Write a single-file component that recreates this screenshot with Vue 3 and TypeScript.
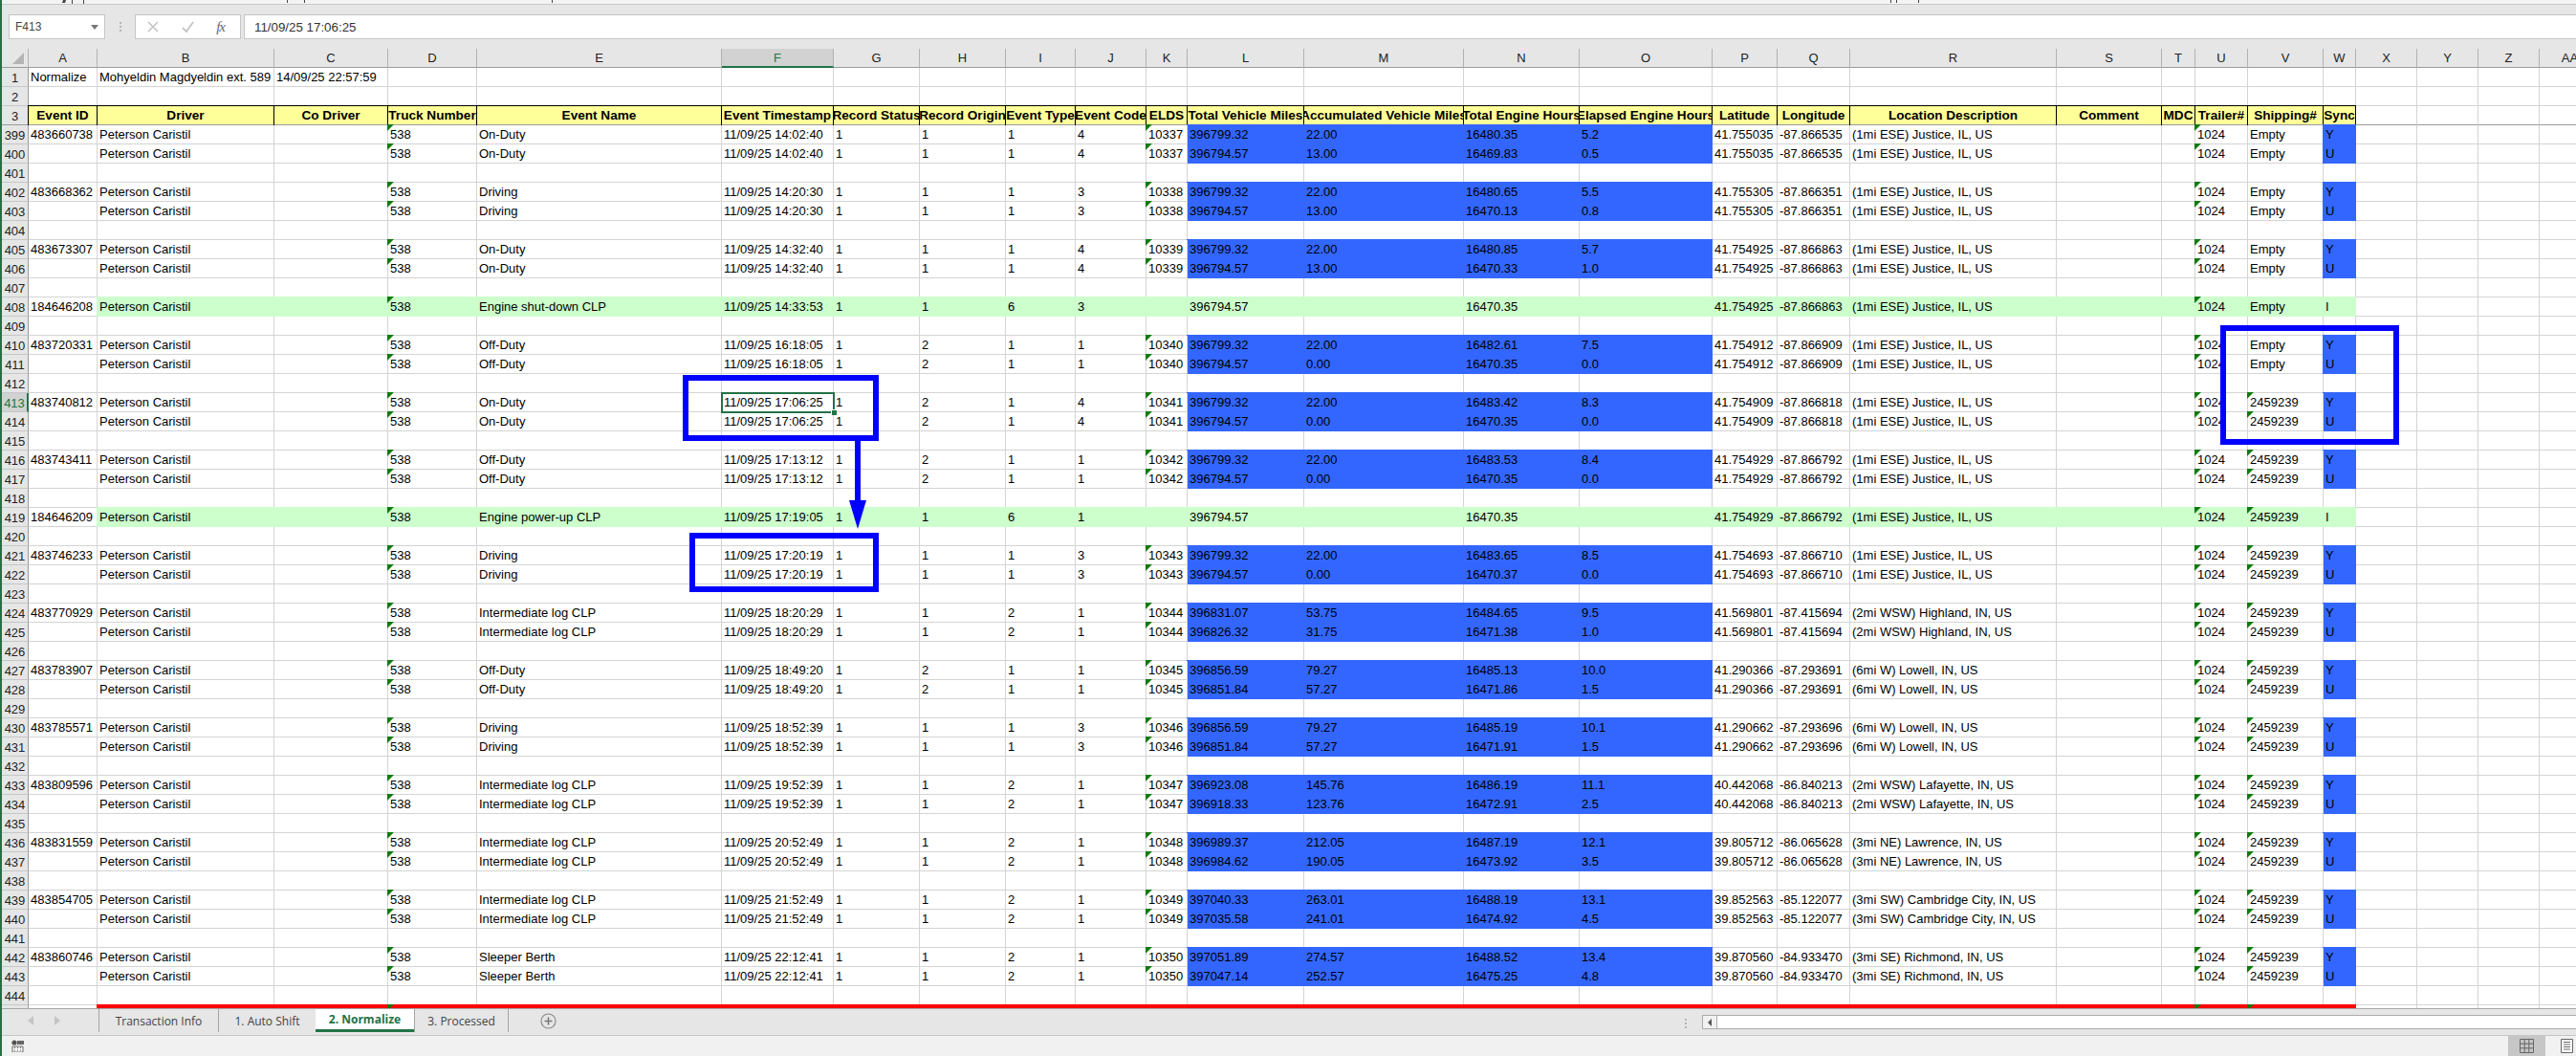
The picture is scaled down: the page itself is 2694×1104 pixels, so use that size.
<script setup lang="ts">
interface Cell { key: string; text: string; cls: string }
interface Event2 {
  id: string; ev: string; time: string; h: string; i: string; j: string; k: string
  l: string[]; m: string[]; n: string[]; o: string[]
  lat: string; lon: string; loc: string; ship: string
}
interface Green {
  id: string; ev: string; time: string; i: string; j: string
  l: string; n: string; lat: string; lon: string; loc: string; ship: string; green: true
}

const letters = ['A','B','C','D','E','F','G','H','I','J','K','L','M','N','O','P','Q','R','S','T','U','V','W','X','Y','Z','AA']
const headers = ['Event ID','Driver','Co Driver','Truck Number','Event Name','Event Timestamp','Record Status','Record Origin','Event Type','Event Code','ELDS','Total Vehicle Miles','Accumulated Vehicle Miles','Total Engine Hours','Elapsed Engine Hours','Latitude','Longitude','Location Description','Comment','MDC','Trailer#','Shipping#','Sync']

const base = ['396799.32', '396794.57']
const justice = '(1mi ESE) Justice, IL, US'
const il = 'Intermediate log CLP'
const items: (Event2 | Green)[] = [
  { id:'483660738', ev:'On-Duty', time:'14:02:40', h:'1', i:'1', j:'4', k:'10337', l:base, m:['22.00','13.00'], n:['16480.35','16469.83'], o:['5.2','0.5'], lat:'41.755035', lon:'-87.866535', loc:justice, ship:'Empty' },
  { id:'483668362', ev:'Driving', time:'14:20:30', h:'1', i:'1', j:'3', k:'10338', l:base, m:['22.00','13.00'], n:['16480.65','16470.13'], o:['5.5','0.8'], lat:'41.755305', lon:'-87.866351', loc:justice, ship:'Empty' },
  { id:'483673307', ev:'On-Duty', time:'14:32:40', h:'1', i:'1', j:'4', k:'10339', l:base, m:['22.00','13.00'], n:['16480.85','16470.33'], o:['5.7','1.0'], lat:'41.754925', lon:'-87.866863', loc:justice, ship:'Empty' },
  { green:true, id:'184646208', ev:'Engine shut-down CLP', time:'14:33:53', i:'6', j:'3', l:'396794.57', n:'16470.35', lat:'41.754925', lon:'-87.866863', loc:justice, ship:'Empty' },
  { id:'483720331', ev:'Off-Duty', time:'16:18:05', h:'2', i:'1', j:'1', k:'10340', l:base, m:['22.00','0.00'], n:['16482.61','16470.35'], o:['7.5','0.0'], lat:'41.754912', lon:'-87.866909', loc:justice, ship:'Empty' },
  { id:'483740812', ev:'On-Duty', time:'17:06:25', h:'2', i:'1', j:'4', k:'10341', l:base, m:['22.00','0.00'], n:['16483.42','16470.35'], o:['8.3','0.0'], lat:'41.754909', lon:'-87.866818', loc:justice, ship:'2459239' },
  { id:'483743411', ev:'Off-Duty', time:'17:13:12', h:'2', i:'1', j:'1', k:'10342', l:base, m:['22.00','0.00'], n:['16483.53','16470.35'], o:['8.4','0.0'], lat:'41.754929', lon:'-87.866792', loc:justice, ship:'2459239' },
  { green:true, id:'184646209', ev:'Engine power-up CLP', time:'17:19:05', i:'6', j:'1', l:'396794.57', n:'16470.35', lat:'41.754929', lon:'-87.866792', loc:justice, ship:'2459239' },
  { id:'483746233', ev:'Driving', time:'17:20:19', h:'1', i:'1', j:'3', k:'10343', l:base, m:['22.00','0.00'], n:['16483.65','16470.37'], o:['8.5','0.0'], lat:'41.754693', lon:'-87.866710', loc:justice, ship:'2459239' },
  { id:'483770929', ev:il, time:'18:20:29', h:'1', i:'2', j:'1', k:'10344', l:['396831.07','396826.32'], m:['53.75','31.75'], n:['16484.65','16471.38'], o:['9.5','1.0'], lat:'41.569801', lon:'-87.415694', loc:'(2mi WSW) Highland, IN, US', ship:'2459239' },
  { id:'483783907', ev:'Off-Duty', time:'18:49:20', h:'2', i:'1', j:'1', k:'10345', l:['396856.59','396851.84'], m:['79.27','57.27'], n:['16485.13','16471.86'], o:['10.0','1.5'], lat:'41.290366', lon:'-87.293691', loc:'(6mi W) Lowell, IN, US', ship:'2459239' },
  { id:'483785571', ev:'Driving', time:'18:52:39', h:'1', i:'1', j:'3', k:'10346', l:['396856.59','396851.84'], m:['79.27','57.27'], n:['16485.19','16471.91'], o:['10.1','1.5'], lat:'41.290662', lon:'-87.293696', loc:'(6mi W) Lowell, IN, US', ship:'2459239' },
  { id:'483809596', ev:il, time:'19:52:39', h:'1', i:'2', j:'1', k:'10347', l:['396923.08','396918.33'], m:['145.76','123.76'], n:['16486.19','16472.91'], o:['11.1','2.5'], lat:'40.442068', lon:'-86.840213', loc:'(2mi WSW) Lafayette, IN, US', ship:'2459239' },
  { id:'483831559', ev:il, time:'20:52:49', h:'1', i:'2', j:'1', k:'10348', l:['396989.37','396984.62'], m:['212.05','190.05'], n:['16487.19','16473.92'], o:['12.1','3.5'], lat:'39.805712', lon:'-86.065628', loc:'(3mi NE) Lawrence, IN, US', ship:'2459239' },
  { id:'483854705', ev:il, time:'21:52:49', h:'1', i:'2', j:'1', k:'10349', l:['397040.33','397035.58'], m:['263.01','241.01'], n:['16488.19','16474.92'], o:['13.1','4.5'], lat:'39.852563', lon:'-85.122077', loc:'(3mi SW) Cambridge City, IN, US', ship:'2459239' },
  { id:'483860746', ev:'Sleeper Berth', time:'22:12:41', h:'1', i:'2', j:'1', k:'10350', l:['397051.89','397047.14'], m:['274.57','252.57'], n:['16488.52','16475.25'], o:['13.4','4.8'], lat:'39.870560', lon:'-84.933470', loc:'(3mi SE) Richmond, IN, US', ship:'2459239' },
]

const cells: Cell[] = []

function push(num: string, vals: Record<string, string>, extra: (c: string) => string, headCls = ''): void {
  cells.push({ key: `h${num}`, text: num, cls: `rowhead ${headCls}` })
  letters.forEach((c) => {
    cells.push({ key: `${c}${num}`, text: vals[c] ?? '', cls: `cell ${extra(c)}` })
  })
}

cells.push({ key: 'corner', text: '', cls: 'corner' })
letters.forEach((c) => {
  cells.push({ key: `col${c}`, text: c, cls: c === 'F' ? 'colhead colsel' : 'colhead' })
})

push('1', { A:'Normalize', B:'Mohyeldin Magdyeldin ext. 589', C:'14/09/25 22:57:59' }, () => '')
push('2', {}, () => '')
const headVals: Record<string, string> = {}
headers.forEach((h, i) => { headVals[letters[i]] = h })
push('3', headVals, (c) => (letters.indexOf(c) < 23 ? 'yellow' : 'frozen'), 'frozenhead')

let row = 399
const driver = 'Peterson Caristil'
items.forEach((it) => {
  if ('green' in it) {
    const v: Record<string, string> = {
      A: it.id, B: driver, D: '538', E: it.ev, F: `11/09/25 ${it.time}`, G: '1', H: '1', I: it.i, J: it.j,
      L: it.l, N: it.n, P: it.lat, Q: it.lon, R: it.loc, U: '1024', V: it.ship, W: 'I',
    }
    push(String(row++), v, (c) => {
      const idx = letters.indexOf(c)
      const fill = idx >= 1 && idx <= 22 ? 'green' : ''
      const tri = c === 'D' || c === 'U' || (c === 'V' && it.ship !== 'Empty') ? 'tri' : ''
      return `${fill} ${tri}`
    })
  } else {
    ;[0, 1].forEach((n) => {
      const num = row++
      const v: Record<string, string> = {
        B: driver, D: '538', E: it.ev, F: `11/09/25 ${it.time}`, G: '1', H: it.h, I: it.i, J: it.j, K: it.k,
        L: it.l[n], M: it.m[n], N: it.n[n], O: it.o[n], P: it.lat, Q: it.lon, R: it.loc, U: '1024', V: it.ship, W: n === 0 ? 'Y' : 'U',
      }
      if (n === 0) v.A = it.id
      push(String(num), v, (c) => {
        const parts: string[] = []
        if (['L', 'M', 'N', 'O', 'W'].includes(c)) parts.push('blue')
        if (c === 'D' || c === 'K' || c === 'U' || (c === 'V' && it.ship !== 'Empty')) parts.push('tri')
        if (num === 413 && c === 'F') parts.push('active')
        return parts.join(' ')
      }, num === 413 ? 'rowsel' : '')
    })
  }
  push(String(row++), {}, () => '')
})
push('445', {}, (c) => {
  const idx = letters.indexOf(c)
  const fill = idx >= 1 && idx <= 22 ? 'red' : ''
  const tri = c === 'D' || c === 'U' || c === 'V' ? 'tri' : ''
  return `${fill} ${tri}`
})

const tabs = [
  { name: 'Transaction Info', cls: 't1' },
  { name: '1. Auto Shift', cls: 't2' },
  { name: '2. Normalize', cls: 't3 on' },
  { name: '3. Processed', cls: 't4' },
]
</script>

<template>
  <div class="app">
    <div class="ribbon-cut">
      <svg width="2692" height="4" class="ticks">
        <path d="M64 0h3l-1 3h-3zM73 0h1v4h-1zM85 0h1v4h-1zM298 0h1v3h-1zM316 0h1v3h-1zM575 0h1v3h-1zM1975 0h1v3h-1zM1981 0h1v3h-1zM2004 0h1v3h-1z" fill="#444" />
      </svg>
    </div>

    <div class="formula-bar">
      <div class="namebox">
        <span>F413</span>
        <svg width="8" height="5" viewBox="0 0 8 5"><path d="M0 0h8L4 5z" fill="#777" /></svg>
      </div>
      <div class="grip"><i></i><i></i><i></i></div>
      <div class="fbtns">
        <svg width="14" height="14" viewBox="0 0 14 14"><path d="M2 2l10 10M12 2L2 12" stroke="#c4c4c4" stroke-width="1.6" fill="none" /></svg>
        <svg width="15" height="14" viewBox="0 0 15 14"><path d="M2 8l4 4 7-10" stroke="#c4c4c4" stroke-width="1.8" fill="none" /></svg>
        <span class="fx">fx</span>
      </div>
      <div class="formula">11/09/25 17:06:25</div>
    </div>

    <div class="sheet">
      <div class="grid">
        <div v-for="c in cells" :key="c.key" :class="c.cls"><span class="txt">{{ c.text }}</span></div>
      </div>
      <div class="mark m1"></div>
      <div class="mark m2"></div>
      <div class="mark m3"></div>
      <svg class="arrow" width="18" height="92" viewBox="0 0 18 92">
        <path d="M6 0h6v62h6L9 92 0 62h6z" fill="#0000ff" />
      </svg>
    </div>

    <div class="tabbar">
      <div class="nav">
        <svg width="6" height="10" viewBox="0 0 6 10"><path d="M6 0v10L0 5z" fill="#c4c4c4" /></svg>
        <svg width="6" height="10" viewBox="0 0 6 10"><path d="M0 0v10l6-5z" fill="#c4c4c4" /></svg>
      </div>
      <div v-for="t in tabs" :key="t.name" class="tab" :class="t.cls">{{ t.name }}</div>
      <svg class="plus" width="17" height="17" viewBox="0 0 17 17">
        <circle cx="8.5" cy="8.5" r="7.5" fill="none" stroke="#8a8a8a" stroke-width="1.2" />
        <path d="M8.5 4.5v8M4.5 8.5h8" stroke="#777" stroke-width="1.5" />
      </svg>
      <div class="spacer"></div>
      <div class="grip small"><i></i><i></i><i></i></div>
      <div class="scroll">
        <div class="scroll-btn"><svg width="4" height="8" viewBox="0 0 4 8"><path d="M4 0v8L0 4z" fill="#555" /></svg></div>
      </div>
    </div>

    <div class="status">
      <svg class="macro" width="13" height="13" viewBox="0 0 13 13">
        <circle cx="3" cy="3" r="2.6" fill="#555" />
        <path d="M6 1h7v4H6z" fill="#666" />
        <path d="M1 7h11v6H1z" fill="#fff" stroke="#666" />
        <path d="M3 8.500h1M6 8.500h1M9 8.500h1M3 11h1M6 11h1M9 11h1" stroke="#444" />
      </svg>
      <div class="spacer"></div>
      <div class="view on">
        <svg width="15" height="15" viewBox="0 0 15 15"><path d="M.5.500h14v14H.5zM.5 5.200h14M.5 9.800h14M5.200.500v14M9.800.500v14" fill="none" stroke="#666" /></svg>
      </div>
      <div class="view page">
        <svg width="13" height="15" viewBox="0 0 13 15"><path d="M.5.500h12v14H.5z" fill="#fff" stroke="#666" /><path d="M3 3.500h7M3 6h7M3 8.500h7M3 11h7" stroke="#666" /></svg>
      </div>
    </div>
  </div>
</template>

<style>
html, body { margin: 0; overflow: hidden; }
</style>

<style scoped>
.app {
  width: 2694px;
  height: 1104px;
  box-sizing: border-box;
  border-left: 2px solid #217346;
  display: flex;
  flex-direction: column;
  overflow: hidden;
  font-family: "Liberation Sans", Arial, sans-serif;
  font-size: 13px;
  color: #000;
  background: #e6e6e6;
}
.ribbon-cut {
  height: 4px;
  flex: none;
  background: #f3f3f3;
  border-bottom: 1px solid #c8c8c8;
}
.ticks { display: block; }
.formula-bar {
  flex: none;
  height: 26px;
  padding: 10px 0;
  display: flex;
  background: #e6e6e6;
}
.namebox {
  width: 101px;
  margin-left: 7px;
  box-sizing: border-box;
  background: #fff;
  border: 1px solid #c6c6c6;
  display: flex;
  align-items: center;
  justify-content: space-between;
  padding: 0 6px;
  font-size: 12px;
  color: #444;
}
.grip {
  width: 31px;
  display: flex;
  flex-direction: column;
  align-items: center;
  justify-content: center;
  gap: 2px;
}
.grip i { width: 2px; height: 2px; background: #b4b4b4; display: block; }
.fbtns {
  width: 111px;
  box-sizing: border-box;
  background: #fff;
  border: 1px solid #c6c6c6;
  display: flex;
  align-items: center;
  justify-content: space-between;
  padding: 0 16px 0 11px;
}
.fx {
  font-family: "Liberation Serif", serif;
  font-style: italic;
  font-size: 15px;
  color: #666;
  letter-spacing: -1px;
}
.formula {
  flex: 1;
  margin-left: 3px;
  background: #fff;
  border-top: 1px solid #c6c6c6;
  border-bottom: 1px solid #c6c6c6;
  border-left: 1px solid #c6c6c6;
  padding-left: 10px;
  display: flex;
  align-items: center;
  font-size: 13.33px;
  color: #333;
}
.sheet {
  flex: none;
  height: 1003px;
  position: relative;
  overflow: hidden;
  background: #fff;
}
.grid {
  display: grid;
  grid-template-columns: 28px 72px 185px 119px 93px 256px 117px 90px 90px 73px 74px 43px 122px 167px 121px 139px 68px 76px 216px 110px 35px 55px 79px 34px 64px 64px 64px 64px;
  grid-auto-rows: 20px;
  width: 2720px;
}
.grid > div {
  box-sizing: border-box;
  display: flex;
  align-items: center;
  white-space: nowrap;
  overflow: hidden;
  min-width: 0;
}
.corner {
  background: #e6e6e6;
  border-right: 1px solid #b1b1b1;
  border-bottom: 1px solid #9b9b9b;
  position: relative;
}
.corner::after {
  content: "";
  position: absolute;
  left: 11px;
  top: 4px;
  width: 12px;
  height: 12px;
  background: #b4b4b4;
  clip-path: polygon(100% 0, 100% 100%, 0 100%);
}
.colhead {
  background: #e6e6e6;
  border-right: 1px solid #b1b1b1;
  border-bottom: 1px solid #9b9b9b;
  justify-content: center;
  color: #222;
}
.colsel {
  background: #d2d2d2;
  border-bottom: 2px solid #217346;
  color: #217346;
}
.rowhead {
  background: #e6e6e6;
  border-right: 1px solid #9b9b9b;
  border-bottom: 1px solid #c6c6c6;
  justify-content: center;
  color: #222;
  padding-top: 2px;
}
.rowsel {
  background: #d2d2d2;
  color: #217346;
  border-right: 2px solid #217346;
}
.frozenhead { border-bottom-color: #9b9b9b; }
.grid > .cell {
  background: #fff;
  border-right: 1px solid #d4d4d4;
  border-bottom: 1px solid #d4d4d4;
  padding-left: 2px;
}
.grid > .cell.frozen { border-bottom-color: #9b9b9b; }
.grid > .cell.yellow {
  background: #ffff99;
  font-weight: 700;
  font-size: 13.6px;
  justify-content: center;
  padding-left: 0;
  border-right-color: #000;
  border-bottom-color: #9b9b9b;
  box-shadow: -1px 0 0 #000, 0 -1px 0 #000, -1px -1px 0 #000;
}
.grid > .cell.blue {
  background: #3366ff;
  border-color: #3366ff;
  box-shadow: -1px 0 0 #3366ff, 0 -1px 0 #3366ff, -1px -1px 0 #3366ff;
}
.grid > .cell.green {
  background: #ccffcc;
  border-color: #ccffcc;
  box-shadow: -1px 0 0 #ccffcc, 0 -1px 0 #ccffcc, -1px -1px 0 #ccffcc;
}
.grid > .cell.red {
  background: #ff0000;
  border-color: #ff0000;
  box-shadow: -1px 0 0 #ff0000, 0 -1px 0 #ff0000, -1px -1px 0 #ff0000;
}
.grid > .cell.tri {
  position: relative;
  overflow: visible;
}
.grid > .cell.tri::before {
  content: "";
  position: absolute;
  left: -1px;
  top: -1px;
  width: 7px;
  height: 7px;
  background: #0f7b0f;
  clip-path: polygon(0 0, 100% 0, 0 100%);
}
.grid > .cell.active {
  position: relative;
  overflow: visible;
  z-index: 2;
}
.grid > .cell.active::before {
  content: "";
  position: absolute;
  left: -1px;
  top: -1px;
  right: -2px;
  bottom: -2px;
  border: 2px solid #217346;
}
.grid > .cell.active::after {
  content: "";
  position: absolute;
  right: -4px;
  bottom: -4px;
  width: 5px;
  height: 5px;
  background: #217346;
  border: 1px solid #fff;
  border-width: 1px 0 0 1px;
}
.mark {
  position: absolute;
  box-sizing: border-box;
  border: 6px solid #0000ff;
  z-index: 3;
}
.m1 { left: 712px; top: 341px; width: 205px; height: 69px; }
.m2 { left: 719px; top: 506px; width: 198px; height: 62px; }
.m3 { left: 2320px; top: 289px; width: 187px; height: 125px; }
.arrow { position: absolute; left: 886px; top: 410px; z-index: 3; }
.tabbar {
  flex: none;
  height: 27px;
  background: #e6e6e6;
  border-top: 1px solid #a6a6a6;
  border-bottom: 1px solid #c6c6c6;
  display: flex;
  align-items: flex-start;
}
.nav {
  width: 101px;
  height: 24px;
  box-sizing: border-box;
  padding-left: 27px;
  display: flex;
  align-items: center;
  gap: 22px;
}
.tab {
  height: 24px;
  box-sizing: border-box;
  font-family: "Open Sans", sans-serif;
  font-size: 12px;
  color: #444;
  display: flex;
  align-items: center;
  justify-content: center;
  border-left: 1px solid #a6a6a6;
  background-clip: padding-box;
}
.t1 { width: 125px; }
.t2 { width: 102px; }
.t3 { width: 103px; }
.t4 { width: 99px; border-right: 1px solid #a6a6a6; }
.tab.on {
  background: #fff;
  color: #217346;
  font-weight: 700;
  border-left: none;
  border-bottom: 3px solid #217346;
}
.plus { margin: 4px 0 0 33px; }
.spacer { flex: 1; }
.grip.small { width: 8px; height: 24px; margin-right: 13px; margin-top: 3px; }
.scroll {
  width: 914px;
  height: 15px;
  margin-top: 6px;
  box-sizing: border-box;
  background: #fff;
  border: 1px solid #ababab;
  border-right: none;
}
.scroll-btn {
  width: 14px;
  height: 13px;
  border-right: 1px solid #ababab;
  background: #f1f1f1;
  display: flex;
  align-items: center;
  justify-content: center;
}
.status {
  flex: none;
  height: 21px;
  background: #f1f1f1;
  display: flex;
  align-items: stretch;
}
.macro { margin: 4px 0 0 10px; }
.view {
  display: flex;
  align-items: center;
  justify-content: center;
}
.view.on { width: 39px; background: #c6c6c6; }
.view.page { width: 32px; box-sizing: border-box; justify-content: flex-start; padding-left: 16px; }
</style>
